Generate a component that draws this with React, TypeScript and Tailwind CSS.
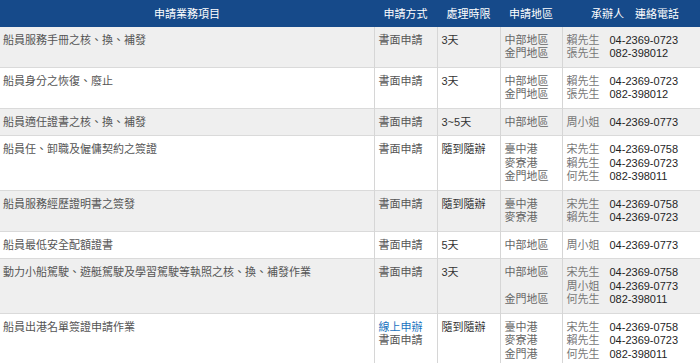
import React from "react";

type Contact = [string, string];
type Row = {
  item: string;
  methods: { text: string; link?: boolean }[];
  time: string;
  regions: string[];
  contacts: Contact[];
};

const rows: Row[] = [
  {
    item: "船員服務手冊之核、換、補發",
    methods: [{ text: "書面申請" }],
    time: "3天",
    regions: ["中部地區", "金門地區"],
    contacts: [
      ["賴先生", "04-2369-0723"],
      ["張先生", "082-398012"],
    ],
  },
  {
    item: "船員身分之恢復、廢止",
    methods: [{ text: "書面申請" }],
    time: "3天",
    regions: ["中部地區", "金門地區"],
    contacts: [
      ["賴先生", "04-2369-0723"],
      ["張先生", "082-398012"],
    ],
  },
  {
    item: "船員適任證書之核、換、補發",
    methods: [{ text: "書面申請" }],
    time: "3~5天",
    regions: ["中部地區"],
    contacts: [["周小姐", "04-2369-0773"]],
  },
  {
    item: "船員任、卸職及僱傭契約之簽證",
    methods: [{ text: "書面申請" }],
    time: "隨到隨辦",
    regions: ["臺中港", "麥寮港", "金門地區"],
    contacts: [
      ["宋先生", "04-2369-0758"],
      ["賴先生", "04-2369-0723"],
      ["何先生", "082-398011"],
    ],
  },
  {
    item: "船員服務經歷證明書之簽發",
    methods: [{ text: "書面申請" }],
    time: "隨到隨辦",
    regions: ["臺中港", "麥寮港"],
    contacts: [
      ["宋先生", "04-2369-0758"],
      ["賴先生", "04-2369-0723"],
    ],
  },
  {
    item: "船員最低安全配額證書",
    methods: [{ text: "書面申請" }],
    time: "5天",
    regions: ["中部地區"],
    contacts: [["周小姐", "04-2369-0773"]],
  },
  {
    item: "動力小船駕駛、遊艇駕駛及學習駕駛等執照之核、換、補發作業",
    methods: [{ text: "書面申請" }],
    time: "3天",
    regions: ["中部地區", "\u00a0", "金門地區"],
    contacts: [
      ["宋先生", "04-2369-0758"],
      ["周小姐", "04-2369-0773"],
      ["何先生", "082-398011"],
    ],
  },
  {
    item: "船員出港名單簽證申請作業",
    methods: [{ text: "線上申辦", link: true }, { text: "書面申請" }],
    time: "隨到隨辦",
    regions: ["臺中港", "麥寮港", "金門港"],
    contacts: [
      ["宋先生", "04-2369-0758"],
      ["賴先生", "04-2369-0723"],
      ["何先生", "082-398011"],
    ],
  },
];

const font = {
  fontFamily: '"Liberation Sans", "Noto Sans CJK TC", sans-serif',
};

export default function App() {
  return (
    <div className="w-[700px] h-[363px] overflow-hidden bg-white" style={font}>
      <table className="w-[700px] table-fixed border-collapse text-[11px] leading-[13.5px]">
        <colgroup>
          <col className="w-[374px]" />
          <col className="w-[63px]" />
          <col className="w-[63px]" />
          <col className="w-[62px]" />
          <col className="w-[138px]" />
        </colgroup>
        <thead>
          <tr className="bg-[#164a8a] text-white">
            <th className="pt-[8px] pb-[5px] font-normal text-center">申請業務項目</th>
            <th className="pt-[8px] pb-[5px] font-normal text-center">申請方式</th>
            <th className="pt-[8px] pb-[5px] font-normal text-center">處理時限</th>
            <th className="pt-[8px] pb-[5px] font-normal text-center">申請地區</th>
            <th className="pt-[8px] pb-[5px] pl-[8px] font-normal text-center whitespace-nowrap">
              承辦人　連絡電話
            </th>
          </tr>
        </thead>
        <tbody>
          {rows.map((r, i) => (
            <tr
              key={i}
              className={`${i % 2 === 0 ? "bg-[#efefef]" : "bg-white"} border-b border-[#dadada] align-top`}
            >
              <td className="pt-[7px] pb-[6px] pl-[3px] text-[#555]">{r.item}</td>
              <td className="pt-[7px] pb-[6px] pl-[4px] border-l border-[#d6d6d6]">
                {r.methods.map((m, j) => (
                  <div key={j} className={m.link ? "text-[#1a73c0]" : "text-[#555]"}>
                    {m.text}
                  </div>
                ))}
              </td>
              <td className="pt-[7px] pb-[6px] pl-[4px] border-l border-[#d6d6d6] text-[#333]">
                {r.time}
              </td>
              <td className="pt-[7px] pb-[6px] pl-[4px] border-l border-[#d6d6d6] text-[#666]">
                {r.regions.map((g, j) => (
                  <div key={j}>{g}</div>
                ))}
              </td>
              <td className="pt-[7px] pb-[6px] pl-[4px] border-l border-[#d6d6d6]">
                <div className="grid grid-cols-[43px_1fr]">
                  {r.contacts.map(([n, p], j) => (
                    <React.Fragment key={j}>
                      <div className="text-[#777]">{n}</div>
                      <div className="text-[#1f1f1f]">{p}</div>
                    </React.Fragment>
                  ))}
                </div>
              </td>
            </tr>
          ))}
        </tbody>
      </table>
    </div>
  );
}
